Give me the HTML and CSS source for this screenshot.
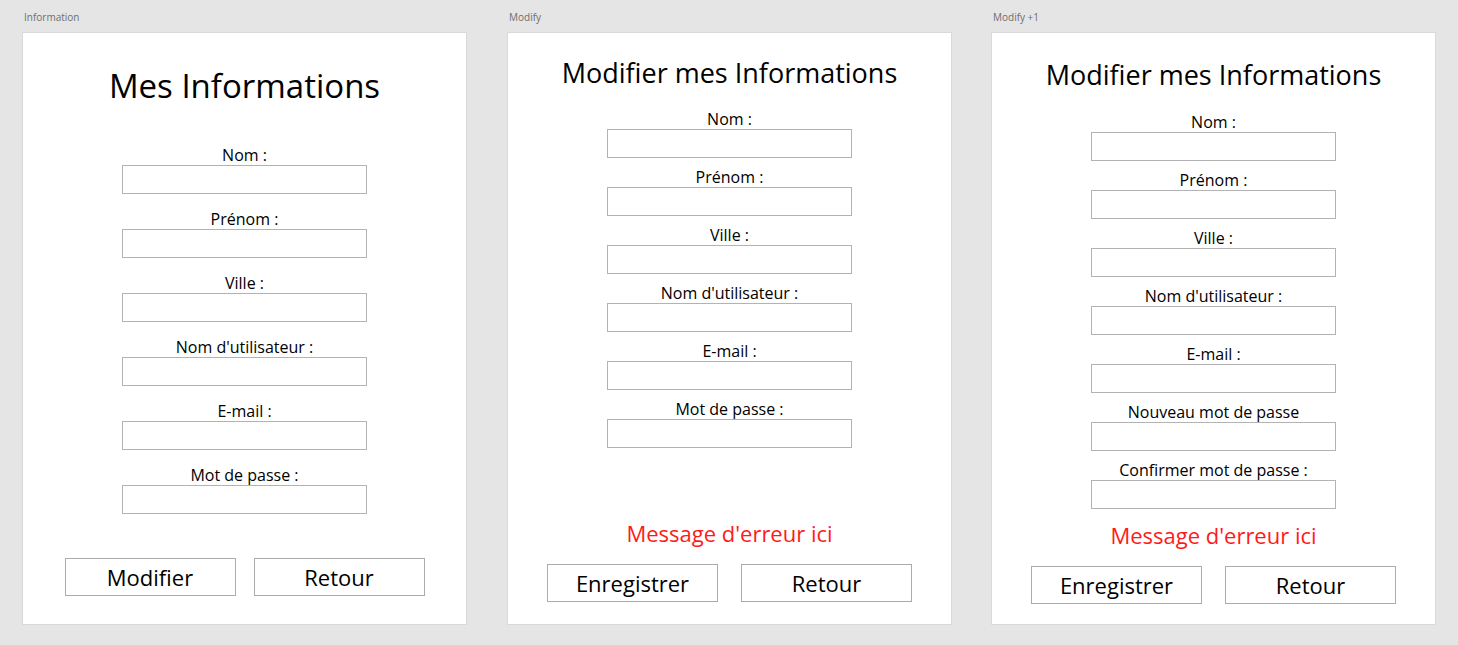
FILE: index.html
```html
<!DOCTYPE html>
<html lang="fr">
<head>
<meta charset="utf-8">
<title>Artboards</title>
<link rel="stylesheet" href="styles.css">
</head>
<body>
<div class="boards">
  <section class="board">
    <div class="board-label">Information</div>
    <div class="artboard info">
      <h1 class="title">Mes Informations</h1>
      <div class="fields">
        <div class="field"><label>Nom :</label><div class="input"></div></div>
        <div class="field"><label>Prénom :</label><div class="input"></div></div>
        <div class="field"><label>Ville :</label><div class="input"></div></div>
        <div class="field"><label>Nom d'utilisateur :</label><div class="input"></div></div>
        <div class="field"><label>E-mail :</label><div class="input"></div></div>
        <div class="field"><label>Mot de passe :</label><div class="input"></div></div>
      </div>
      <div class="buttons">
        <div class="btn">Modifier</div>
        <div class="btn">Retour</div>
      </div>
    </div>
  </section>

  <section class="board">
    <div class="board-label">Modify</div>
    <div class="artboard modify">
      <h1 class="title">Modifier mes Informations</h1>
      <div class="fields">
        <div class="field"><label>Nom :</label><div class="input"></div></div>
        <div class="field"><label>Prénom :</label><div class="input"></div></div>
        <div class="field"><label>Ville :</label><div class="input"></div></div>
        <div class="field"><label>Nom d'utilisateur :</label><div class="input"></div></div>
        <div class="field"><label>E-mail :</label><div class="input"></div></div>
        <div class="field"><label>Mot de passe :</label><div class="input"></div></div>
      </div>
      <div class="error">Message d'erreur ici</div>
      <div class="buttons">
        <div class="btn">Enregistrer</div>
        <div class="btn">Retour</div>
      </div>
    </div>
  </section>

  <section class="board">
    <div class="board-label">Modify +1</div>
    <div class="artboard modify plus">
      <h1 class="title">Modifier mes Informations</h1>
      <div class="fields">
        <div class="field"><label>Nom :</label><div class="input"></div></div>
        <div class="field"><label>Prénom :</label><div class="input"></div></div>
        <div class="field"><label>Ville :</label><div class="input"></div></div>
        <div class="field"><label>Nom d'utilisateur :</label><div class="input"></div></div>
        <div class="field"><label>E-mail :</label><div class="input"></div></div>
        <div class="field"><label>Nouveau mot de passe</label><div class="input"></div></div>
        <div class="field"><label>Confirmer mot de passe :</label><div class="input"></div></div>
      </div>
      <div class="error">Message d'erreur ici</div>
      <div class="buttons">
        <div class="btn">Enregistrer</div>
        <div class="btn">Retour</div>
      </div>
    </div>
  </section>
</div>
</body>
</html>
```

FILE: styles.css
```css
* { box-sizing: border-box; }
html, body { margin: 0; padding: 0; }
body {
  background: #e5e5e5;
  font-family: "Open Sans", "Noto Sans", sans-serif;
  color: #000;
  padding: 10px 0 0 22px;
}
.boards {
  display: flex;
  gap: 40px;
}
.board { width: 445px; }
.board:last-child { margin-left: -1px; }
.board-label {
  font-size: 10px;
  line-height: 14px;
  height: 22px;
  color: #6e6e6e;
  padding-left: 2px;
}
.artboard {
  height: 593px;
  background: #fff;
  border: 1px solid #d9d9d9;
  display: flex;
  flex-direction: column;
  align-items: center;
}
.title {
  margin: 0;
  font-weight: 400;
  white-space: nowrap;
}
.info .title {
  font-size: 33px;
  line-height: 42px;
  margin-top: 32px;
}
.modify .title {
  font-size: 27px;
  line-height: 36px;
  margin-top: 22px;
}
.plus .title { margin-top: 24px; }

.fields {
  display: flex;
  flex-direction: column;
  align-items: center;
}
.info .fields { gap: 15px; margin-top: 38px; }
.modify .fields { gap: 9px; margin-top: 18px; }
.plus .fields { margin-top: 19px; }

.field {
  display: flex;
  flex-direction: column;
  align-items: center;
}
.field label {
  font-size: 16px;
  line-height: 20px;
  white-space: nowrap;
}
.input {
  width: 245px;
  height: 29px;
  border: 1px solid #b3b3b3;
  background: #fff;
}
.error {
  color: #ff1a1a;
  font-size: 22px;
  line-height: 30px;
  margin-top: 70px;
}
.plus .error { margin-top: 11px; }

.buttons {
  display: flex;
  gap: 18px;
  margin-top: 44px;
}
.modify .buttons { gap: 23px; margin-top: 16px; }
.btn {
  width: 171px;
  height: 38px;
  border: 1px solid #ababab;
  background: #fff;
  display: flex;
  align-items: center;
  justify-content: center;
  font-size: 22px;
  line-height: 1;
}
```
